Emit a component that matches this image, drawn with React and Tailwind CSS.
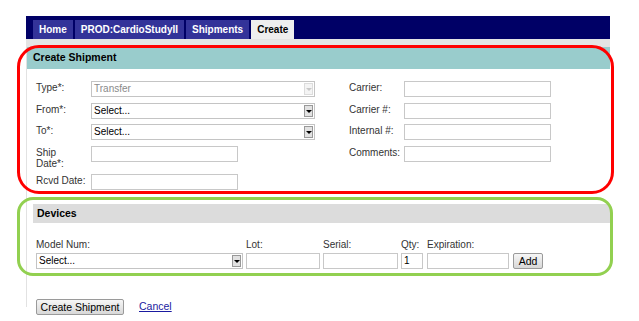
const font = { fontFamily: '"Liberation Sans", Arial, sans-serif' };

function Tab({ label, active }) {
  return (
    <div
      className={
        active
          ? "flex h-[19px] items-center bg-[#eeeeee] px-[6px] text-[10px] font-bold text-black"
          : "flex h-[19px] items-center bg-[#333399] px-[6px] text-[10px] font-bold text-white"
      }
    >
      {label}
    </div>
  );
}

function Select({ value, disabled, className }) {
  return (
    <div
      className={`flex h-[16px] items-stretch border border-[#c4c4c4] bg-white ${className}`}
    >
      <span
        className={`flex-1 pl-[2px] text-[10px] leading-[14px] ${
          disabled ? "text-[#8a8a8a]" : "text-black"
        }`}
      >
        {value}
      </span>
      <span
        className={`m-px flex w-[9px] items-center justify-center border ${
          disabled ? "border-[#dcdcdc] bg-[#f4f4f4]" : "border-[#999] bg-[#e2e2e2]"
        }`}
      >
        <span
          className={`h-0 w-0 border-x-[3px] border-t-[3px] border-x-transparent ${
            disabled ? "border-t-[#c8c8c8]" : "border-t-black"
          }`}
        />
      </span>
    </div>
  );
}

function Input({ className, value }) {
  return (
    <div
      className={`h-[16px] border border-[#c8c8c8] bg-white pl-[2px] text-[10px] leading-[14px] text-black ${className}`}
    >
      {value}
    </div>
  );
}

function Row({ label, children, className = "" }) {
  return (
    <div className={`flex ${className}`}>
      <div className="w-[55px] pt-px text-[10px] leading-[11px] text-[#333]">{label}</div>
      {children}
    </div>
  );
}

export default function App() {
  return (
    <div className="relative h-[321px] w-[639px] overflow-hidden bg-white" style={font}>
      <div className="ml-[26px] w-[584px] pt-[16px]">
        <div className="flex h-[23px] items-end gap-[2px] bg-[#000066] pl-[7px]">
          <Tab label="Home" />
          <Tab label="PROD:CardioStudyII" />
          <Tab label="Shipments" />
          <Tab label="Create" active />
        </div>
        <div className="h-[8px] bg-[#e4e4e4]" />
        <div className="h-[260px] border-l border-[#e2e2e2]">
          <div className="flex h-[22px] items-center bg-[#99cccc] pl-[6px] text-[10.5px] font-bold text-black">
            Create Shipment
          </div>

          <div className="flex pl-[9px] pt-[12px]">
            <div className="flex w-[313px] flex-col">
              <Row label="Type*:">
                <Select value="Transfer" disabled className="w-[224px]" />
              </Row>
              <Row label="From*:" className="mt-[6px]">
                <Select value="Select..." className="w-[224px]" />
              </Row>
              <Row label="To*:" className="mt-[5px]">
                <Select value="Select..." className="w-[224px]" />
              </Row>
              <Row label={<>Ship<br />Date*:</>} className="mt-[6px] h-[28px]">
                <Input className="w-[147px]" />
              </Row>
              <Row label="Rcvd Date:">
                <Input className="w-[147px]" />
              </Row>
            </div>
            <div className="flex flex-col">
              <Row label="Carrier:">
                <Input className="w-[147px]" />
              </Row>
              <Row label="Carrier #:" className="mt-[6px]">
                <Input className="w-[147px]" />
              </Row>
              <Row label="Internal #:" className="mt-[5px]">
                <Input className="w-[147px]" />
              </Row>
              <Row label="Comments:" className="mt-[6px]">
                <Input className="w-[147px]" />
              </Row>
            </div>
          </div>

          <div className="mt-[14px] pl-[6px]">
            <div className="flex h-[19px] items-center bg-[#dcdcdc] pl-[4px] text-[10.5px] font-bold text-black">
              Devices
            </div>
            <div className="flex items-end gap-[3px] pl-[3px] pt-[16px] text-[10px] leading-[11px] text-[#333]">
              <div className="flex flex-col gap-[3px]">
                <span>Model Num:</span>
                <Select value="Select..." className="w-[207px]" />
              </div>
              <div className="flex flex-col gap-[3px]">
                <span>Lot:</span>
                <Input className="w-[74px]" />
              </div>
              <div className="flex flex-col gap-[3px]">
                <span>Serial:</span>
                <Input className="w-[75px]" />
              </div>
              <div className="flex flex-col gap-[3px]">
                <span>Qty:</span>
                <Input className="w-[22px]" value="1" />
              </div>
              <div className="ml-px flex flex-col gap-[3px]">
                <span>Expiration:</span>
                <Input className="w-[82px]" />
              </div>
              <button className="ml-px h-[16px] w-[30px] rounded-[2px] border border-[#9a9a9a] bg-gradient-to-b from-[#f6f6f6] to-[#d8d8d8] text-[10.5px] leading-[14px] text-black">
                Add
              </button>
            </div>
          </div>

          <div className="mt-[30px] flex items-center gap-[15px] pl-[9px]">
            <button className="h-[16px] w-[88px] rounded-[2px] border border-[#9a9a9a] bg-gradient-to-b from-[#f6f6f6] to-[#d8d8d8] text-[10.5px] leading-[14px] text-black">
              Create Shipment
            </button>
            <a href="#" className="text-[10.5px] text-[#1a1aa0] underline">
              Cancel
            </a>
          </div>
        </div>
      </div>

      <div className="pointer-events-none absolute left-[17px] top-[45px] h-[149px] w-[597px] rounded-[22px] border-[3px] border-[#ff0000]" />
      <div className="pointer-events-none absolute left-[17px] top-[197px] h-[79px] w-[596px] rounded-[16px] border-[3px] border-[#92d050]" />
    </div>
  );
}
